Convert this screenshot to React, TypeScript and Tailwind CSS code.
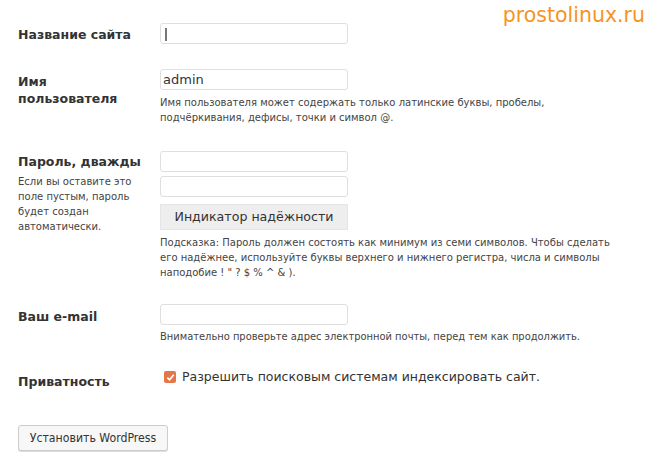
import React from 'react'

const sans = "font-['DejaVu_Sans',sans-serif]"
const cond = "font-['DejaVu_Sans_Condensed','DejaVu_Sans',sans-serif]"

function Field({ value, caret }: { value?: string; caret?: boolean }) {
  return (
    <div className="relative h-[21px] w-[188px] rounded-[3px] border border-[#dfdfdf] bg-white px-[2px] text-[13px] leading-[19px] text-[#333]">
      {caret && <span className="absolute left-[4px] top-[4px] h-[13px] w-[2px] bg-[#777]" />}
      {value}
    </div>
  )
}

function Label({ children, className = '' }: { children: React.ReactNode; className?: string }) {
  return (
    <div className={`w-[160px] shrink-0 pl-[18px] text-[12.5px] font-bold text-[#333] ${className}`}>{children}</div>
  )
}

const help = 'text-[10px] leading-[15px] text-[#444]'

export default function App() {
  return (
    <div className={`relative h-[459px] w-[648px] overflow-hidden bg-white ${sans}`}>
      <div className="absolute right-[3px] top-[1px] text-[20.5px] leading-[28px] text-[#f7941d]">prostolinux.ru</div>

      <div className="flex pt-[23px]">
        <Label className="pt-[2px] leading-[20px]">Название сайта</Label>
        <Field caret />
      </div>

      <div className="mt-[24px] flex">
        <Label className="pt-[4px] leading-[17px]">
          Имя
          <br />
          пользователя
        </Label>
        <div>
          <Field value="admin" />
          <p className={`mt-[5px] ${help}`}>
            Имя пользователя может содержать только латинские буквы, пробелы,
            <br />
            подчёркивания, дефисы, точки и символ @.
          </p>
        </div>
      </div>

      <div className="mt-[26px] flex">
        <div className="w-[160px] shrink-0 pl-[18px] pt-[2px]">
          <div className="text-[12.5px] font-bold leading-[18px] text-[#333]">Пароль, дважды</div>
          <p className={`mt-[3px] ${help}`}>
            Если вы оставите это
            <br />
            поле пустым, пароль
            <br />
            будет создан
            <br />
            автоматически.
          </p>
        </div>
        <div>
          <Field />
          <div className="mt-[4px]">
            <Field />
          </div>
          <div className="mt-[7px] flex h-[26px] w-[188px] items-center justify-center border border-[#e5e5e5] bg-[#eeeeee] text-[12.6px] text-[#333]">
            Индикатор надёжности
          </div>
          <p className={`mt-[5px] ${help}`}>
            Подсказка: Пароль должен состоять как минимум из семи символов. Чтобы сделать
            <br />
            его надёжнее, используйте буквы верхнего и нижнего регистра, числа и символы
            <br />
            наподобие ! " ? $ % ^ &amp; ).
          </p>
        </div>
      </div>

      <div className="mt-[24px] flex">
        <Label className="pt-[3px] leading-[20px]">Ваш e-mail</Label>
        <div>
          <Field />
          <p className={`mt-[5px] text-[11px] leading-[14px] text-[#444] ${cond}`}>
            Внимательно проверьте адрес электронной почты, перед тем как продолжить.
          </p>
        </div>
      </div>

      <div className="mt-[24px] flex">
        <Label className="pt-[4px] leading-[20px]">Приватность</Label>
        <div className="flex h-[18px] items-center pl-[4px]">
          <span className="flex h-[12px] w-[12px] items-center justify-center rounded-[2px] bg-[#e2774a]">
            <svg width="9" height="9" viewBox="0 0 10 10">
              <path d="M1.5 5.2 L4 7.6 L8.6 2" fill="none" stroke="#fff" strokeWidth="1.8" />
            </svg>
          </span>
          <span className="ml-[6px] text-[12.5px] leading-[18px] text-[#333]">
            Разрешить поисковым системам индексировать сайт.
          </span>
        </div>
      </div>

      <div className="mt-[33px] pl-[18px]">
        <div className={`flex h-[26px] w-[150px] items-center justify-center rounded-[3px] border border-[#ccc] bg-[#f7f7f7] text-[12.2px] text-[#333] shadow-[0_1px_0_#ddd] ${cond}`}>
          Установить WordPress
        </div>
      </div>
    </div>
  )
}
